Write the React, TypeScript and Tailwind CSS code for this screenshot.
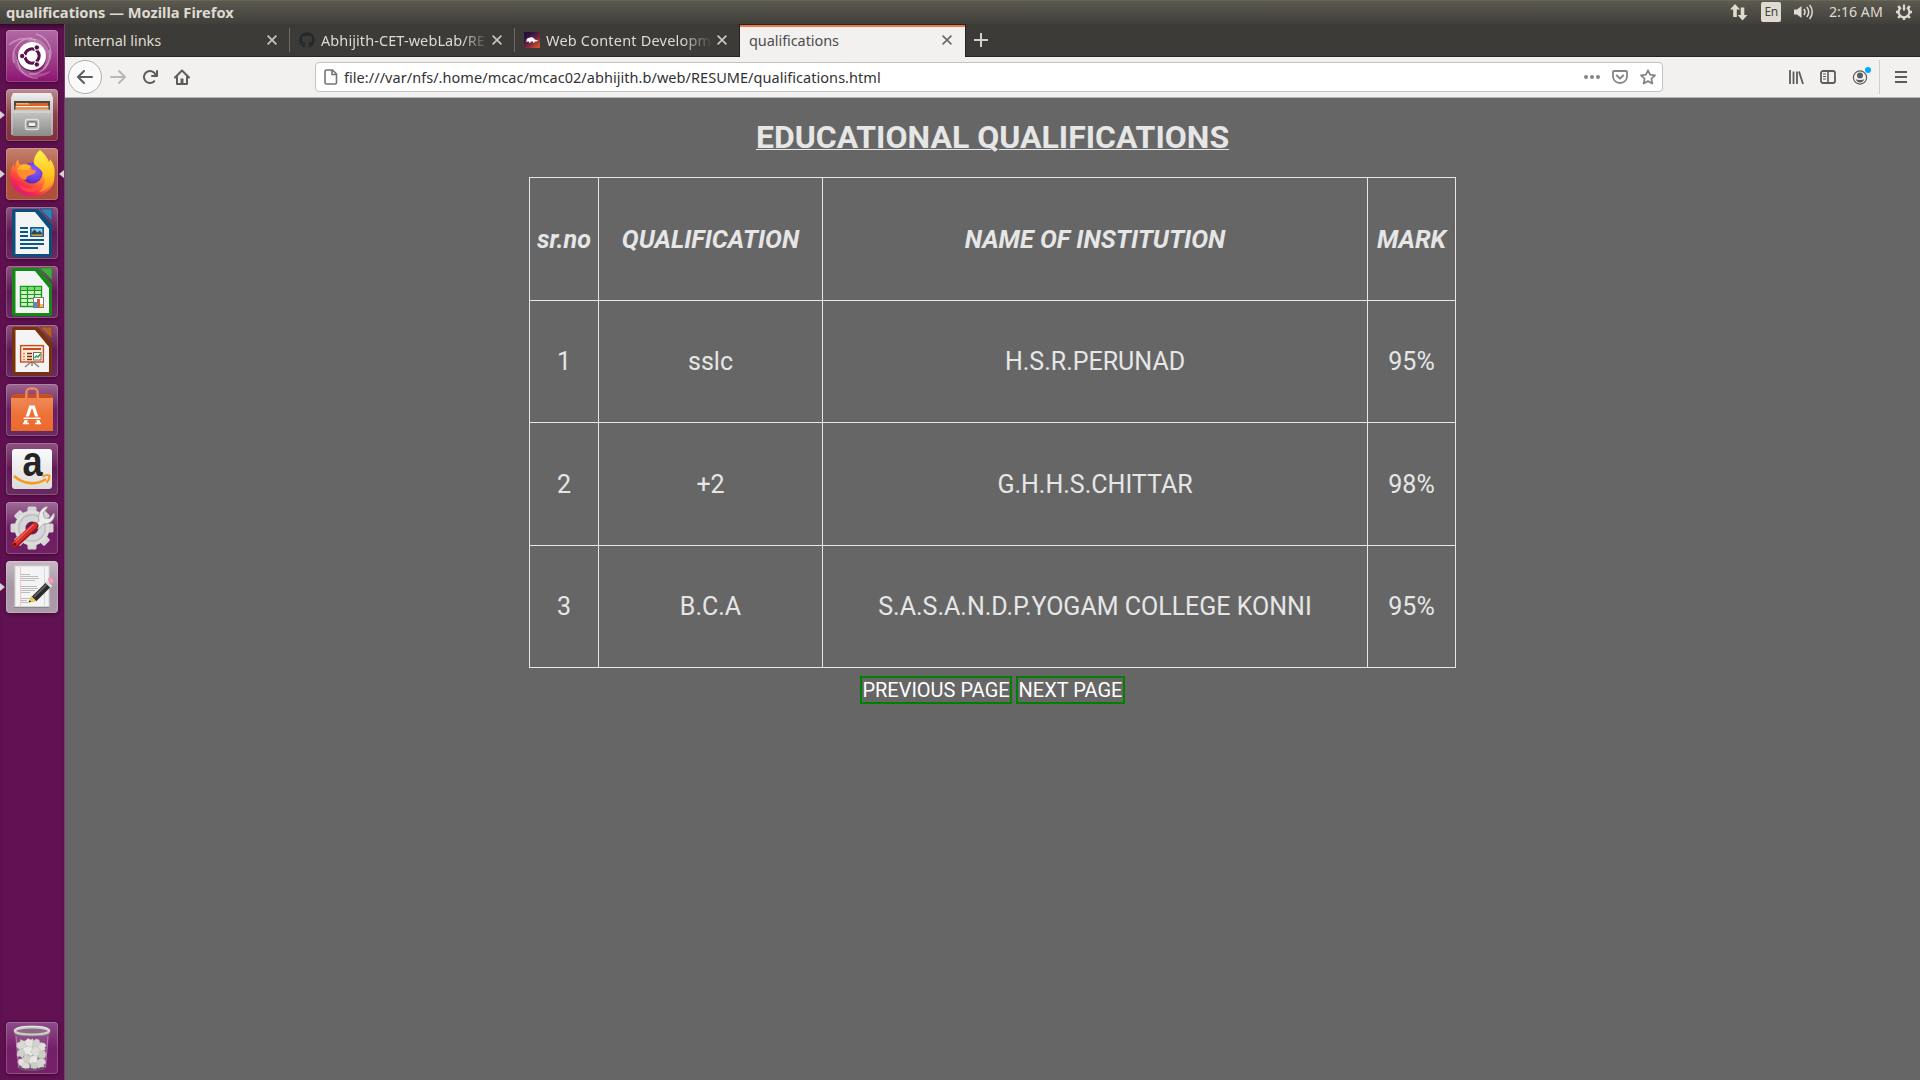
import type { ReactNode } from 'react';
import { FaGithub } from 'react-icons/fa';

/* ---------- Launcher icons (52×52 artboards) ---------- */

function Art({ children }: { children: ReactNode }) {
  return (
    <svg viewBox="0 0 52 52" className="block h-[52px] w-[52px] overflow-visible">
      {children}
    </svg>
  );
}

function DashIcon() {
  return (
    <Art>
      <g fill="none" stroke="#fff">
        <path d="M8 33A19 19 0 0 1 26 8M3 15a27 27 0 0 1 27-5M43 20a19 19 0 0 1-20 24M44 29A20 20 0 0 0 30 4M12 30a18 18 0 0 0 20 18" strokeWidth="1.4" opacity=".35" />
        <path d="M20 10c12-5 23 4 24 16 0 8-3 12-8 16 6-12 2-24-16-32zM8 20c-3 14 4 25 18 27 8 1 16-2 20-7C32 48 14 42 8 20z" fill="#fff" stroke="none" opacity=".2" />
      </g>
      <circle cx="26" cy="27" r="14.4" fill="#2c0520" opacity=".5" />
      <circle cx="26" cy="26" r="14" fill="#fff" />
      <circle cx="26" cy="26" r="7.1" fill="none" stroke="#5a1048" strokeWidth="3.2" />
      <g stroke="#fff" strokeWidth="1.3">
        <path d="M26 26l5.5-9.5M26 26l5.5 9.5M26 26H14" />
      </g>
      <circle cx="26" cy="26" r="5.4" fill="#fff" />
      <g fill="#5a1048" stroke="#fff" strokeWidth="1">
        <circle cx="30.8" cy="17.5" r="2.7" />
        <circle cx="30.8" cy="34.5" r="2.7" />
        <circle cx="16.2" cy="26" r="2.7" />
      </g>
    </Art>
  );
}

function FilesIcon() {
  return (
    <Art>
      <defs>
        <linearGradient id="cab" x1="0" y1="0" x2="0" y2="1">
          <stop offset="0" stopColor="#c9c9c8" />
          <stop offset="1" stopColor="#8b8b8a" />
        </linearGradient>
        <linearGradient id="cabTop" x1="0" y1="0" x2="0" y2="1">
          <stop offset="0" stopColor="#f0f0f0" />
          <stop offset=".3" stopColor="#d2d2d2" />
          <stop offset="1" stopColor="#a8a8a8" />
        </linearGradient>
      </defs>
      <path d="M7 4h38l2 5v37H5V9z" fill="url(#cabTop)" />
      <path d="M8 12h36v10H8z" fill="#4b4745" />
      <path d="M10 14h32v8H10z" fill="#d5622b" />
      <path d="M10 14h12l2 1.5H10z" fill="#f7b060" />
      <path d="M9.500 17h33v1.500h-33z" fill="#fff3e4" />
      <path d="M9.500 18.500h33v3h-33z" fill="#e98a45" />
      <path d="M7 23l1.500-2.500h35L45 23v24H7z" fill="url(#cab)" />
      <path d="M7 23h38" stroke="#dedede" strokeWidth="1" />
      <rect x="19.5" y="30.5" width="13" height="10" rx="2" fill="#a9a9a9" stroke="#dedede" strokeWidth="1.5" />
      <rect x="22" y="33" width="8" height="4.5" rx=".8" fill="#eee" stroke="#555" strokeWidth="1" />
    </Art>
  );
}

function FirefoxIcon() {
  return (
    <Art>
      <defs>
        <linearGradient id="ffBody" x1=".85" y1=".05" x2=".2" y2=".95">
          <stop offset="0" stopColor="#fff44f" />
          <stop offset=".32" stopColor="#ffb02c" />
          <stop offset=".55" stopColor="#ff6a36" />
          <stop offset=".8" stopColor="#f5274f" />
          <stop offset="1" stopColor="#d9158b" />
        </linearGradient>
        <radialGradient id="ffGlobe" cx=".6" cy=".35" r=".75">
          <stop offset="0" stopColor="#9059ff" />
          <stop offset=".6" stopColor="#6a3fe0" />
          <stop offset="1" stopColor="#42259c" />
        </radialGradient>
        <linearGradient id="ffTail" x1="0" y1="0" x2="0" y2="1">
          <stop offset="0" stopColor="#fff24a" />
          <stop offset=".6" stopColor="#ffc31f" />
          <stop offset="1" stopColor="#ff8a2a" />
        </linearGradient>
      </defs>
      <path d="M12 11c0 3 1 5 3 6 3-1 6-1 9 0l2 3 8-9 2 5c7 0 11 5 12 11 2 12-8 21-22 21C12 48 3 38 4 26c0-4 2-8 4-10 0 2 0 3 1 4 0-3 1-6 3-9z" fill="url(#ffBody)" />
      <circle cx="26" cy="25" r="10.5" fill="url(#ffGlobe)" />
      <path d="M15 17c3-1 7-1 10 1 1 2 0 3 1 4 2 0 3 0 4 1-1 3-5 4-8 5-1 1-2 2-2 4-5-1-9-5-9-10 0-2 2-4 4-5z" fill="#ff8c2c" />
      <path d="M15 17c3-1 6-1 9 1l-1 4c-4 0-7 0-12-1z" fill="#ffb52c" />
      <path d="M34 2c5 4 8 9 9 12 1-1 1-2 1-3 5 6 6 15 3 22-3 6-8 10-14 11 5-4 7-10 5-16-1-5-5-8-8-10-5-3-1-12 4-16z" fill="url(#ffTail)" />
      <path d="M13 36c6 6 17 6 24-2-2 7-8 11-15 10-5-1-8-4-9-8z" fill="#ff5c3c" opacity=".6" />
    </Art>
  );
}

function DocBase({ dark, fold, children }: { dark: string; fold: string; children: ReactNode }) {
  return (
    <Art>
      <path d="M8 2h24l14 16v29a3 3 0 0 1-3 3H9a3 3 0 0 1-3-3V4a2 2 0 0 1 2-2z" fill={dark} />
      <path d="M9.5 5H29l14 17v25H9.5z" fill="#f4f4f4" />
      <path d="M34 2h12v12z" fill={fold} stroke={dark} strokeOpacity=".6" strokeWidth="1" />
      {children}
    </Art>
  );
}

function WriterIcon() {
  return (
    <DocBase dark="#0b4f7f" fold="#2e86b5">
      <path d="M14 21h8M14 25h8M14 29h8M14 33h24M14 37h24M14 41h18" stroke="#0d568a" strokeWidth="2" />
      <rect x="24.8" y="20.8" width="12.4" height="8.4" fill="#8fcdf0" stroke="#0d568a" strokeWidth="1.5" />
      <path d="M25.5 28.5v-3l3-3 3 3 2-2 3 3v2z" fill="#2b4a52" />
      <path d="M25.5 27.5h11v1.3h-11z" fill="#e6b23a" />
    </DocBase>
  );
}

function CalcIcon() {
  return (
    <DocBase dark="#138a16" fold="#3fae3f">
      <path d="M14.500 20.500h21v20h-21z" fill="#d3f3c9" stroke="#1a9a1c" strokeWidth="1.4" />
      <path d="M15 21h20v3H15z" fill="#7ddc72" />
      <path d="M14 24.500h22M14 28.500h22M14 32.500h22M14 36.500h22M21.500 20v21M28.500 20v21" stroke="#1a9a1c" strokeWidth="1.2" />
      <rect x="27.500" y="31.500" width="10" height="10" fill="#fff" stroke="#7a7a7a" />
      <path d="M28 36h3v5h-3z" fill="#2c9be0" />
      <path d="M31 33h3v8h-3z" fill="#e2572b" />
      <path d="M34 38h3v3h-3z" fill="#f1c232" />
    </DocBase>
  );
}

function ImpressIcon() {
  return (
    <DocBase dark="#7a3209" fold="#b0602a">
      <path d="M19 42l6-5h2l6 5M26 36v5" stroke="#8a8a8a" strokeWidth="1.600" fill="none" />
      <rect x="14.600" y="20.600" width="22.800" height="16.400" fill="#fde9dc" stroke="#c2501b" strokeWidth="1.400" />
      <path d="M17 24h18" stroke="#c2501b" strokeWidth="2" />
      <path d="M17 28.500h2M17 31.500h2M17 34.500h2" stroke="#e8875a" strokeWidth="1.700" />
      <path d="M21 28.500h5M21 31.500h5M21 34.500h5" stroke="#7a3209" strokeWidth="1.700" />
      <rect x="27.500" y="27.500" width="7.500" height="7.500" fill="#fff" stroke="#6d6d6d" />
      <path d="M28.500 33l2-2 1.500 1 2.500-3" stroke="#23a03a" strokeWidth="1.500" fill="none" />
    </DocBase>
  );
}

function SoftwareIcon() {
  return (
    <Art>
      <defs>
        <linearGradient id="bag" x1="0" y1="0" x2="0" y2="1">
          <stop offset="0" stopColor="#ee8a58" />
          <stop offset=".5" stopColor="#ed7238" />
          <stop offset="1" stopColor="#ec6a2c" />
        </linearGradient>
      </defs>
      <path d="M5 12l3-2h36l3 2v4H5z" fill="#c94e1e" />
      <path d="M5 14h42v33H5z" fill="url(#bag)" />
      <path d="M20.500 18V9c0-4 2-4.500 5.500-4.500s5.500.5 5.500 4.500v9" fill="none" stroke="#e27850" strokeWidth="2.600" />
      <path d="M20 18V9c0-4 2-4.800 6-4.800s6 .8 6 4.800v9" fill="none" stroke="#f6a27c" strokeWidth=".8" />
      <path d="M19 39.500l5.500-16.500h3L33 39.500" fill="none" stroke="#fff" strokeWidth="3.200" />
      <path d="M17 33h18v2.600H17z" fill="#fff" stroke="#e8682e" strokeWidth="1" />
      <path d="M17 39.500h6M29 39.500h6" stroke="#fff" strokeWidth="1.600" />
    </Art>
  );
}

function AmazonIcon() {
  return (
    <Art>
      <defs>
        <linearGradient id="amz" x1="0" y1="0" x2="0" y2="1">
          <stop offset="0" stopColor="#fafafa" />
          <stop offset="1" stopColor="#dcdcdc" />
        </linearGradient>
      </defs>
      <rect x="6" y="6" width="40" height="40" rx="3" fill="url(#amz)" />
      <text
        transform="translate(26.500 33) scale(.86 1)"
        textAnchor="middle"
        fontFamily="'Liberation Sans', sans-serif"
        fontWeight="700"
        fontSize="42"
        fill="#242424"
      >
        a
      </text>
      <path d="M8 33c10 9 23 9 32 3" fill="none" stroke="#f79a1c" strokeWidth="2.600" />
      <path d="M36.500 33.500c3-1.500 6-1.500 7-.8 0 2-1 5-3 7" fill="none" stroke="#f79a1c" strokeWidth="2" />
    </Art>
  );
}

function SettingsIcon() {
  return (
    <Art>
      <g fill="#d5d5d5">
        {[0, 45, 90, 135].map((a) => (
          <rect key={a} x="21.500" y="4.500" width="9" height="43" rx="1.500" transform={`rotate(${a} 26 26)`} />
        ))}
        <circle cx="26" cy="26" r="17.500" fill="#dcdcdc" />
      </g>
      <circle cx="26" cy="26" r="14" fill="#bdbdbd" />
      <circle cx="26" cy="26" r="12.500" fill="#d6d6d6" />
      <circle cx="26" cy="26" r="6.500" fill="#6b1c5c" />
      <path d="M28 24l5-5c-1.500-6 1-12 7-14.500l2 .5-5 6 1.500 5 5 .5 4.500-5.500.500 2c-1 7-6 9-11 9l-5 5z" fill="#ececec" stroke="#9a9a9a" strokeWidth=".8" />
      <path d="M9.300 42.300L29 24" stroke="#a31414" strokeWidth="7" strokeLinecap="round" />
      <path d="M9 41.700L28.500 23.500" stroke="#d5302e" strokeWidth="5.200" strokeLinecap="round" />
      <path d="M10 39L27 23" stroke="#f06a60" strokeWidth="1.200" strokeLinecap="round" />
      <circle cx="8.800" cy="42.300" r="1.500" fill="#6d0b0b" />
    </Art>
  );
}

function TextEditorIcon() {
  return (
    <Art>
      <path d="M8 45.500h35v1.500H8z" fill="#777" opacity=".6" />
      <rect x="9" y="5" width="34" height="40.500" fill="#f4f4f4" stroke="#d4d4d4" />
      <path d="M14.500 6v39" stroke="#f6c4c4" strokeWidth="1" />
      <path d="M38.500 6v39" stroke="#cfdaee" strokeWidth="1" />
      <path d="M15 13.500h9M15 15.500h17M15 17.500h18M15 19.500h14M15 25.500h16M15 27.500h17M15 29.500h14M15 31.500h9M15 37.500h9M15 39.500h6M15 41.500h7" stroke="#bdbdbd" strokeWidth="1" />
      <path d="M28 38l14-14" stroke="#2b2b2b" strokeWidth="6.500" />
      <path d="M28 36L40.500 23.500" stroke="#6a6a6a" strokeWidth="1.600" />
      <path d="M23 41l2.500-5.500 4.500 4.500z" fill="#efc94c" stroke="#d8a92e" strokeWidth=".6" />
      <path d="M22.500 41.500l1.200-2.300 1.300 1.500z" fill="#222" />
      <path d="M40 20.500l5.500 5.500" stroke="#dcdcdc" strokeWidth="2.600" />
      <path d="M42 18.500l3-2.500 3 4-2 3z" fill="#f3a6c4" stroke="#e48bb0" strokeWidth="1" />
    </Art>
  );
}

function TrashIcon() {
  const paper: [number, number, number, string][] = [
    [16, 23, 5, '#d9d9d6'], [24, 21, 4.5, '#e6e6e3'], [31, 22, 4.5, '#d2d2ce'], [36, 25, 4, '#e0e0dc'],
    [16, 31, 4.5, '#cfcfcb'], [23, 29, 5, '#e8e8e5'], [30, 30, 5, '#dcdcd8'], [36, 33, 4, '#cdcdc8'],
    [17, 40, 4.5, '#e2e2de'], [22, 37, 4.5, '#d0d0cb'], [28, 39, 5, '#e8e8e4'], [35, 41, 4.5, '#d6d6d1'],
    [20, 44, 3.5, '#dcdcd8'], [28, 44, 3.5, '#cbcbc6'],
  ];
  return (
    <Art>
      <path d="M9 12l3 33c0 2 6 3 14 3s14-1 14-3l3-33z" fill="#c9a6c4" opacity=".22" />
      {paper.map(([x, y, r, c], i) => (
        <path
          key={i}
          transform={`translate(${x} ${y}) rotate(${i * 47}) scale(${r / 5})`}
          fill={c}
          stroke="#b4b4ae"
          strokeWidth=".4"
          d="M-5-2l3-1 .5-2.500 3.500 1.500 3-.5.500 3.500-1 3.500-3.500 2.500-4-.5-2.500-3z"
        />
      ))}
      <path d="M10 14l2.500 31c0 2 6 3 13.500 3s13.500-1 13.500-3L42 14" fill="none" stroke="#cdb7ca" strokeWidth=".9" opacity=".6" />
      <path d="M13 46c5 2 21 2 26 0" stroke="#4b4b4b" strokeWidth="1.400" fill="none" opacity=".7" />
      <ellipse cx="26" cy="9" rx="16.500" ry="3" fill="#8d6b88" />
      <ellipse cx="26" cy="9" rx="17" ry="3.800" fill="none" stroke="#cfcfcb" strokeWidth="2.600" />
      <path d="M8.500 8c2-3 9-3.800 17.500-3.800S41.500 5 43.500 8" fill="none" stroke="#f0f0ee" strokeWidth="1" />
      <path d="M8 11.500c3 3 33 3 36 0" fill="none" stroke="#8e8e8a" strokeWidth=".8" />
    </Art>
  );
}

const launcher: { icon: ReactNode; tone: string; running?: boolean; focused?: boolean }[] = [
  { icon: <DashIcon />, tone: 'from-[#b26aa5] to-[#8c0f72]' },
  { icon: <FilesIcon />, tone: 'from-[#bd8c91] via-[#8c4048] to-[#80303b]', running: true },
  { icon: <FirefoxIcon />, tone: 'from-[#c4826f] via-[#b05442] to-[#b04c3a]', running: true, focused: true },
  { icon: <WriterIcon />, tone: 'from-[#8d527f] via-[#5f1a55] to-[#6b2a62]' },
  { icon: <CalcIcon />, tone: 'from-[#8d527f] via-[#5f1a55] to-[#6b2a62]' },
  { icon: <ImpressIcon />, tone: 'from-[#8d527f] via-[#5f1a55] to-[#6b2a62]' },
  { icon: <SoftwareIcon />, tone: 'from-[#9c6690] via-[#672060] to-[#6b2a62]' },
  { icon: <AmazonIcon />, tone: 'from-[#8d527f] via-[#5f1a55] to-[#6b2a62]' },
  { icon: <SettingsIcon />, tone: 'from-[#a06c99] via-[#6d1f62] to-[#701f63]' },
  { icon: <TextEditorIcon />, tone: 'from-[#c6bac3] via-[#a897a5] to-[#ac9ca9]', running: true },
];

function Tile({ icon, tone, running, focused }: { icon: ReactNode; tone: string; running?: boolean; focused?: boolean }) {
  return (
    <div className="flex h-[52px] w-16 shrink-0 items-center">
      <div className="w-1.5">
        {running && <div className="h-0 w-0 border-y-[4px] border-l-[5px] border-y-transparent border-l-[#d8d2d6]" />}
      </div>
      <div className={`h-[52px] w-[52px] rounded-[4px] bg-linear-to-b shadow-[0_1px_4px_rgba(0,0,0,0.45),inset_0_0_0_1px_rgba(255,255,255,0.2)] ${tone}`}>
        {icon}
      </div>
      <div className="flex w-1.5 justify-end">
        {focused && <div className="h-0 w-0 border-y-[4px] border-r-[5px] border-y-transparent border-r-[#d8d2d6]" />}
      </div>
    </div>
  );
}

/* ---------- Window chrome ---------- */

function Glyph({ className, children }: { className: string; children: ReactNode }) {
  return (
    <svg viewBox="0 0 16 16" className={`block h-4 w-4 shrink-0 ${className}`} fill="none" stroke="currentColor" strokeWidth="2">
      {children}
    </svg>
  );
}

const arrowPath =
  'M15 7H3.414l4.293-4.293a1 1 0 0 0-1.414-1.414l-6 6a1 1 0 0 0 0 1.414l6 6a1 1 0 0 0 1.414-1.414L3.414 9H15a1 1 0 0 0 0-2z';

function Close({ className }: { className: string }) {
  return (
    <svg viewBox="0 0 10 10" className={`block h-2.5 w-2.5 shrink-0 ${className}`} fill="none" stroke="currentColor" strokeWidth="1.7">
      <path d="M.6.6l8.800 8.800M9.400.6L.6 9.400" />
    </svg>
  );
}

function TopPanel() {
  return (
    <div className="flex h-6 shrink-0 items-center bg-linear-to-b from-[#5c5a50] to-[#403f3a] pl-1.5 pr-[6px] text-[#dfdbd2] shadow-[inset_0_1px_0_#6a6755]">
      <span className="whitespace-nowrap text-[14.65px] leading-6 font-bold">qualifications — Mozilla Firefox</span>
      <svg viewBox="0 0 20 20" className="ml-auto h-5 w-5" fill="#dfdbd2">
        <path d="M6 2l5 5.500H7.800V15H4.200V7.500H1zM13.500 18.500l-5-5.500h3.200V5.500h3.600V13h3.200z" />
      </svg>
      <div className="ml-3 flex h-5 w-5 items-center justify-center rounded-[2px] bg-[#dfdbd2] text-[12px] leading-none tracking-[-0.5px] text-[#45443e]">
        En
      </div>
      <svg viewBox="0 0 22 20" className="ml-3 h-5 w-[22px]" fill="none" stroke="#dfdbd2" strokeWidth="1.500">
        <path d="M1 7.500h3L8.500 4v12L4 12.500H1z" fill="#dfdbd2" stroke="none" />
        <path d="M11 7c1.200 1.800 1.200 4.200 0 6M13.800 5c2.300 3 2.300 7 0 10M16.600 3c3.500 4.200 3.500 9.800 0 14" />
      </svg>
      <span className="ml-[14px] w-[54px] whitespace-nowrap text-[14.2px] leading-6">2:16 AM</span>
      <svg viewBox="0 0 20 20" className="ml-[11px] h-5 w-5" fill="none" stroke="#dfdbd2">
        <path d="M7 5.500A5.400 5.400 0 1 0 13 5.500" strokeWidth="2.200" />
        <path d="M10 2.500v6" strokeWidth="2.200" />
        <path d="M10 15.500V18M15.500 10H18M2 10h2.500M14 14l1.900 1.900M6 14l-1.900 1.900M14.200 5.800l1.700-1.700M5.800 5.800L4.100 4.100" strokeWidth="2.400" />
      </svg>
    </div>
  );
}

function Tabs() {
  return (
    <div className="flex h-[33px] shrink-0 border-b border-[#252422] bg-[#3c3b37] text-[14.5px] leading-[33px] whitespace-nowrap text-[#dfdbd2]">
      <div className="flex h-8 w-[225px] items-center pl-[9px] pr-[13px]">
        <span className="flex-1 tracking-[-0.05px]">internal links</span>
        <Close className="text-[#c9c5bd]" />
      </div>
      <div className="flex h-8 w-[225px] items-center pr-[13px]">
        <div className="-ml-px h-6 w-px bg-[#6c6b66]" />
        <FaGithub className="ml-[9px] h-4 w-4 shrink-0 text-[#24292e]" />
        <span className="ml-1.5 w-[164px] overflow-hidden tracking-[0.08px] [mask-image:linear-gradient(to_right,#000_86%,transparent_102%)]">
          Abhijith-CET-webLab/RE
        </span>
        <Close className="ml-auto text-[#c9c5bd]" />
      </div>
      <div className="flex h-8 w-[224px] items-center pr-3">
        <div className="-ml-px h-6 w-px bg-[#6c6b66]" />
        <svg viewBox="0 0 16 16" className="ml-[9px] h-4 w-4 shrink-0">
          <defs>
            <linearGradient id="fav" x1="0" y1="0" x2=".8" y2="1">
              <stop offset=".2" stopColor="#24103f" />
              <stop offset=".6" stopColor="#6b2440" />
              <stop offset="1" stopColor="#d3502b" />
            </linearGradient>
          </defs>
          <path d="M0 0h16v16H0z" fill="url(#fav)" />
          <path d="M2.500 8.500c0-2 1.500-3 3.300-2.800 1.700-.9 3.500-.2 4.500 1.400 1 1 2 1.400 3.700 1-.5 1.300-2 1.700-3.500 1.400v1.200H9.200V9.600H6.500v1.200H5V9.600c-1 0-1.800 0-2.500.6z" fill="#fff" />
        </svg>
        <span className="ml-1.5 w-[165px] overflow-hidden tracking-[0.2px] [mask-image:linear-gradient(to_right,#000_82%,transparent_101%)]">
          Web Content Developm
        </span>
        <Close className="ml-auto text-[#c9c5bd]" />
      </div>
      <div className="h-[33px] w-[227px] border-x border-t border-[#252422] bg-[#f2f1f0] text-[#4c4c4c] shadow-[inset_0_2px_0_#f07746]">
        <div className="-mt-px flex h-8 items-center">
          <span className="flex-1 pl-[9px] tracking-[-0.07px]">qualifications</span>
          <Close className="mr-[13px] text-[#6b6b6b]" />
        </div>
      </div>
      <svg viewBox="0 0 14 14" className="mt-[9px] ml-2 h-3.5 w-3.5" stroke="#d5d1c9" strokeWidth="2">
        <path d="M7 0v14M0 7h14" />
      </svg>
    </div>
  );
}

function Toolbar() {
  return (
    <div className="flex h-[41px] shrink-0 items-center border-b border-[#b9b8b6] bg-[#f2f1f0] pl-[3px] text-[#5c5c5c]">
      <div className="flex h-[34px] w-[34px] items-center justify-center rounded-full border border-[#b0afad] bg-[#fafafa]">
        <Glyph className="">
          <path d={arrowPath} fill="currentColor" stroke="none" />
        </Glyph>
      </div>
      <Glyph className="ml-2 -scale-x-100 text-[#b9b8b7]">
        <path d={arrowPath} fill="currentColor" stroke="none" />
      </Glyph>
      <Glyph className="ml-4">
        <path
          d="M15 1a1 1 0 0 0-1 1v2.418A6.995 6.995 0 1 0 8 15a6.954 6.954 0 0 0 4.950-2.050 1 1 0 0 0-1.414-1.414A5.019 5.019 0 1 1 12.549 6H10a1 1 0 0 0 0 2h5a1 1 0 0 0 1-1V2a1 1 0 0 0-1-1z"
          fill="currentColor"
          stroke="none"
        />
      </Glyph>
      <Glyph className="ml-4">
        <path d="M1 8.500l7-7 7 7M3 7.500V15h10V7.500" strokeLinecap="round" strokeLinejoin="round" />
        <path d="M6.500 15V9.500h3V15z" fill="currentColor" stroke="none" />
      </Glyph>
      <div className="ml-[125px] flex h-[30px] w-[1348px] items-center rounded-[4px] border border-[#c3c2c0] bg-white pr-[6px] pl-[7px]">
        <Glyph className="text-[#747474]">
          <path d="M2 2.500A1.500 1.500 0 0 1 3.500 1H9.500L13.500 5v8.500a1.500 1.500 0 0 1-1.500 1.500H3.500A1.500 1.500 0 0 1 2 13.500zM9 1.500v4h4.500" strokeWidth="1.600" />
        </Glyph>
        <span className="ml-[5px] whitespace-nowrap text-[14.5px] leading-7 tracking-[0.045px] text-[#333]">
          file:///var/nfs/.home/mcac/mcac02/abhijith.b/web/RESUME/qualifications.html
        </span>
        <Glyph className="ml-auto text-[#858585]">
          <path d="M0 8a2 2 0 1 0 4 0 2 2 0 1 0-4 0M6 8a2 2 0 1 0 4 0 2 2 0 1 0-4 0M12 8a2 2 0 1 0 4 0 2 2 0 1 0-4 0" fill="currentColor" stroke="none" />
        </Glyph>
        <Glyph className="ml-3 text-[#858585]">
          <path d="M2 2h12a1 1 0 0 1 1 1v4.500a7 6.500 0 0 1-14 0V3a1 1 0 0 1 1-1z" strokeWidth="1.800" />
          <path d="M4.800 6.500L8 9.600l3.200-3.100" strokeLinecap="round" strokeLinejoin="round" />
        </Glyph>
        <Glyph className="ml-3 text-[#858585]">
          <path d="M8 1.300l2.100 4.400 4.900.6-3.600 3.300.9 4.900L8 12.100l-4.300 2.400.9-4.900L1 6.300l4.900-.6z" strokeWidth="1.800" strokeLinejoin="round" />
        </Glyph>
      </div>
      <Glyph className="ml-[125px]">
        <path d="M2 1v14M5.500 2.500V15M9 2.500V15M11 2.500L15 15" strokeWidth="1.800" />
      </Glyph>
      <Glyph className="ml-4">
        <rect x="1" y="2" width="14" height="12" rx="2" strokeWidth="1.800" />
        <path d="M8 2v12" strokeWidth="1.600" />
        <path d="M3 5h3M3 7.500h3M3 10h3" strokeWidth="1" />
      </Glyph>
      <div className="relative ml-4">
        <Glyph className="">
          <circle cx="8" cy="8.500" r="6.600" strokeWidth="1.200" />
          <circle cx="8" cy="6.500" r="3" fill="currentColor" stroke="none" />
          <path d="M3.800 10.300c2 1 6.400 1 8.400 0-.5 2-2.200 3.200-4.200 3.200s-3.700-1.200-4.200-3.200z" fill="currentColor" stroke="none" />
        </Glyph>
        <div className="absolute -top-[2px] -right-[3px] h-1.5 w-1.5 rounded-full bg-[#00a8ff]" />
      </div>
      <div className="ml-[11px] h-[34px] w-px bg-[#cfcecc]" />
      <Glyph className="ml-[13px]">
        <path d="M2 3h12M2 8h12M2 13h12" />
      </Glyph>
    </div>
  );
}

/* ---------- Page ---------- */

const headers = ['sr.no', 'QUALIFICATION', 'NAME OF INSTITUTION', 'MARK'];
const rows = [
  { h: 'h-[122px]', cells: ['1', 'sslc', 'H.S.R.PERUNAD', '95%'] },
  { h: 'h-[123px]', cells: ['2', '+2', 'G.H.H.S.CHITTAR', '98%'] },
  { h: 'h-[122px]', cells: ['3', 'B.C.A', 'S.A.S.A.N.D.P.YOGAM COLLEGE KONNI', '95%'] },
];

function Page() {
  return (
    <main className="flex flex-1 flex-col items-center bg-[#666666] pt-5 font-[Roboto,sans-serif] text-[#e6e6e6]">
      <h1 className="text-[32px] leading-[38px] font-bold underline decoration-1 underline-offset-1">EDUCATIONAL QUALIFICATIONS</h1>
      <div className="mt-[21px] w-[927px] border-t border-l border-[#e6e6e6] text-[25px] leading-[29px]">
        <div className="grid h-[123px] grid-cols-[69px_224px_545px_88px] text-center text-[25.2px] font-bold italic">
          {headers.map((h) => (
            <div key={h} className="flex items-center justify-center border-r border-b border-[#e6e6e6]">
              {h}
            </div>
          ))}
        </div>
        {rows.map((r) => (
          <div key={r.cells[0]} className={`grid grid-cols-[69px_224px_545px_88px] ${r.h}`}>
            {r.cells.map((c, i) => (
              <div key={i} className="flex items-center justify-center border-r border-b border-[#e6e6e6]">
                {c}
              </div>
            ))}
          </div>
        ))}
      </div>
      <div className="mt-2 flex gap-1 text-[20px] leading-6 whitespace-nowrap text-white">
        <a className="flex h-7 w-[152px] justify-center border-2 border-[#008000]">PREVIOUS PAGE</a>
        <a className="flex h-7 w-[109px] justify-center border-2 border-[#008000]">NEXT PAGE</a>
      </div>
    </main>
  );
}

export default function App() {
  return (
    <div className="flex h-[1080px] w-[1920px] flex-col overflow-hidden font-['Noto_Sans',sans-serif]">
      <TopPanel />
      <div className="flex min-h-0 flex-1">
        <aside className="flex w-[65px] shrink-0 flex-col gap-[7px] border-r border-[#7b3b72] bg-[#621152] pt-1.5 pb-1.5 shadow-[inset_0_5px_5px_-3px_rgba(0,0,0,0.6)]">
          {launcher.map((t, i) => (
            <Tile key={i} {...t} />
          ))}
          <div className="mt-auto">
            <Tile icon={<TrashIcon />} tone="from-[#8f4a86] via-[#751f6a] to-[#772069]" />
          </div>
        </aside>
        <div className="flex min-w-0 flex-1 flex-col">
          <Tabs />
          <Toolbar />
          <Page />
        </div>
      </div>
    </div>
  );
}
